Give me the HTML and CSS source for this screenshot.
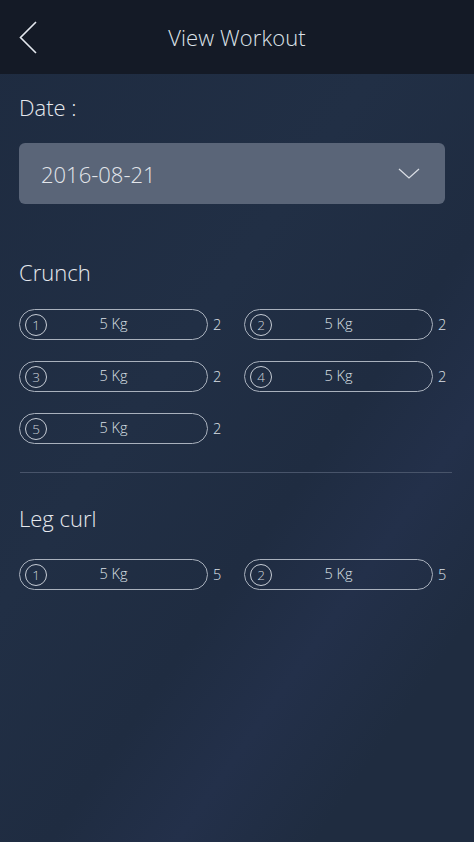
FILE: index.html
```html
<!DOCTYPE html>
<html lang="en">
<head>
    <meta charset="UTF-8">
    <meta name="viewport" content="width=device-width, initial-scale=1.0">
    <title>View Workout</title>
    <link rel="stylesheet" href="styles.css">
</head>
<body>
<div class="topbar">
    <a class="back" href="#">
        <svg width="18" height="33" viewBox="0 0 18 33"><polyline points="17,1 1.5,16.5 17,32" fill="none" stroke="#e4e8ee" stroke-width="1.6"/></svg>
    </a>
    <h1>View Workout</h1>
</div>
<div class="content">
    <div class="label">Date :</div>
    <div class="date-select">
        <span>2016-08-21</span>
        <svg width="22" height="11" viewBox="0 0 22 11"><polyline points="1,1 11,10 21,1" fill="none" stroke="#d9dde4" stroke-width="1.3"/></svg>
    </div>

    <div class="exercise">
        <h2>Crunch</h2>
        <div class="sets">
            <div class="set"><div class="pill"><span class="num">1</span><span class="weight">5 Kg</span></div><span class="reps">2</span></div>
            <div class="set"><div class="pill"><span class="num">2</span><span class="weight">5 Kg</span></div><span class="reps">2</span></div>
            <div class="set"><div class="pill"><span class="num">3</span><span class="weight">5 Kg</span></div><span class="reps">2</span></div>
            <div class="set"><div class="pill"><span class="num">4</span><span class="weight">5 Kg</span></div><span class="reps">2</span></div>
            <div class="set"><div class="pill"><span class="num">5</span><span class="weight">5 Kg</span></div><span class="reps">2</span></div>
        </div>
    </div>
    <hr class="divider">
    <div class="exercise second">
        <h2>Leg curl</h2>
        <div class="sets">
            <div class="set"><div class="pill"><span class="num">1</span><span class="weight">5 Kg</span></div><span class="reps">5</span></div>
            <div class="set"><div class="pill"><span class="num">2</span><span class="weight">5 Kg</span></div><span class="reps">5</span></div>
        </div>
    </div>
</div>
</body>
</html>
```

FILE: styles.css
```css
html, body { height: 100%; }
body {
    margin: 0;
    font-family: "Open Sans", "Liberation Sans", sans-serif;
    font-weight: 300;
    color: #e6e9ee;
    background: #1f2c41;
    background-image: linear-gradient(125deg, #1e2b40 0%, #212f45 40%, #1f2c41 60%, #23304a 72%, #1f2c40 85%);
}
.topbar {
    height: 74px; background: #141a26;
    display: flex; align-items: center; justify-content: center;
    position: relative;
}
.topbar h1 { margin: 0; font-size: 22px; font-weight: 300; color: #dde2e9; letter-spacing: 0.1px; }
.back { position: absolute; left: 19px; top: 21px; display: block; line-height: 0; }
.content { padding: 18px 19px 0 19px; }
.label { font-size: 22px; line-height: 30px; }
.date-select {
    margin-top: 21px; margin-right: 10px; height: 61px;
    background: #5a6578; border-radius: 6px;
    display: flex; align-items: center; justify-content: space-between;
    padding: 0 25px 0 22px;
}
.date-select span { font-size: 22px; color: #e3e6eb; }
.exercise { margin-top: 53px; }
.exercise h2 { margin: 0; font-size: 22px; line-height: 30px; font-weight: 300; }
.sets {
    display: grid; grid-template-columns: 225px 225px;
    row-gap: 21px; margin-top: 22px;
}
.set { display: flex; align-items: center; }
.pill {
    width: 189px; height: 31px; box-sizing: border-box;
    border: 1px solid #a9b1bd; border-radius: 16px;
    display: flex; align-items: center; position: relative;
}
.num {
    width: 22px; height: 22px; box-sizing: border-box; margin-left: 5px;
    border: 1.5px solid #c6ccd5; border-radius: 50%;
    display: flex; align-items: center; justify-content: center;
    font-size: 13.5px; color: #cdd2da;
}
.weight {
    position: absolute; left: 0; right: 0; top: 0; text-align: center;
    font-size: 14.5px; color: #dce0e6; line-height: 27px;
}
.reps { margin-left: 5px; font-size: 14.5px; color: #dce0e6; }
.divider { border: 0; border-top: 1px solid #48546a; margin: 28px 3px 0 1px; }
.exercise.second { margin-top: 30px; }
.exercise.second .sets { margin-top: 26px; }
```
